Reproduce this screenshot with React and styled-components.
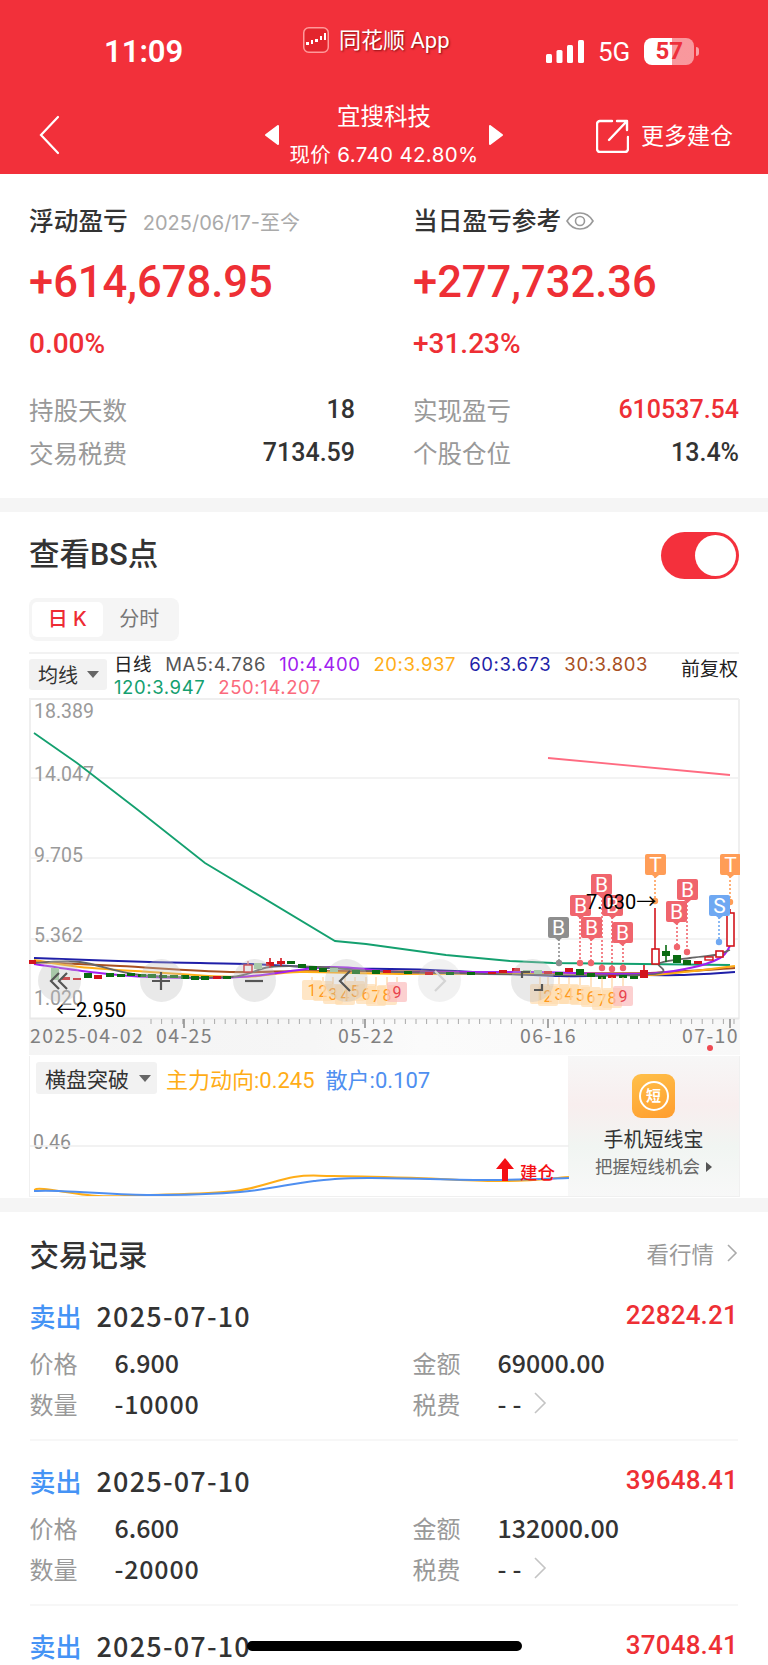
import React from "react";
import styled, { createGlobalStyle } from "styled-components";

const SANS = `"Inter", "Noto Sans CJK SC", sans-serif`;
const NUM = `"Roboto", "Noto Sans CJK SC", sans-serif`;
const CJKNUM = `"Noto Sans CJK SC", sans-serif`;
const RED = "#f2303a";
const TEXTRED = "#ee2f35";

const Global = createGlobalStyle`
  html, body { margin: 0; padding: 0; background: #fff; }
  * { box-sizing: border-box; }
  #root { width: 768px; height: 1665px; overflow: hidden; position: relative; font-family: ${SANS}; }
`;

const Header = styled.header`height: 174px; background: ${RED}; color: #fff;`;
const StatusBar = styled.div`height: 84px; display: grid; grid-template-columns: 303px 145px 1fr;`;
const Time = styled.div`padding: 34px 0 0 104px; font-size: 31px; line-height: 36px; font-weight: 600; font-family: ${NUM};`;
const AppTag = styled.div`
  display: flex; align-items: center; gap: 10px; height: 26px; margin-top: 27px; white-space: nowrap;
  font-size: 22px; line-height: 26px; text-shadow: 1px 1px 2px rgba(90,0,0,.7);
`;
const AppName = styled.span`padding-top: 2px; font-family: "Roboto", "Noto Sans CJK SC", sans-serif;`;
const AppIcon = styled.svg`width: 26px; height: 26px; flex: none;`;
const Signal = styled.div`display: flex; align-items: center; gap: 14px; padding: 38px 0 0 98px; height: 65px;`;
const FiveG = styled.span`font-size: 26px; line-height: 28px; font-family: ${NUM}; font-weight: 400;`;
const Battery = styled.div`
  position: relative; width: 50px; height: 27px; border-radius: 8px; flex: none;
  background: linear-gradient(90deg, #fff 0 56%, rgba(255,255,255,.5) 56% 100%);
  color: #ee2f3a; font-size: 24px; font-weight: 700; line-height: 27px; text-align: center;
  font-family: ${NUM};
  &::after { content: ""; position: absolute; right: -5px; top: 9px; width: 3px; height: 9px; border-radius: 0 3px 3px 0; background: rgba(255,255,255,.55); }
`;
const NavBar = styled.nav`height: 90px; display: grid; grid-template-columns: 265px 238px 1fr;`;
const Back = styled.svg`width: 22px; height: 40px; margin: 31px 0 0 38px; display: block;`;
const Switcher = styled.div`display: flex; justify-content: space-between; align-items: flex-start; padding-top: 41px;`;
const Tri = styled.svg`width: 14px; height: 20px; display: block;`;
const TitleBox = styled.div`margin-top: -24px; text-align: center;`;
const StockName = styled.div`font-size: 23.5px; line-height: 32px; margin-bottom: 10px;`;
const StockPrice = styled.div`font-size: 20.5px; line-height: 24px; white-space: nowrap; letter-spacing: .35px;`;
const More = styled.div`display: flex; align-items: flex-start; gap: 12px; padding: 35px 0 0 93px; font-size: 23px; line-height: 34px; white-space: nowrap;`;
const ExportIcon = styled.svg`width: 33px; height: 34px; flex: none;`;

const Summary = styled.section`
  height: 324px; padding: 30px 29px 0; display: grid; grid-template-columns: 326px 326px; column-gap: 58px; align-content: start;
`;
const Col = styled.div`display: flex; flex-direction: column;`;
const LabelRow = styled.div`display: flex; align-items: center; height: 34px;`;
const Label = styled.span`font-size: 24.7px; line-height: 34px; color: #333; font-weight: 500; white-space: nowrap;`;
const DateNote = styled.span`margin-left: 15px; font-size: 20px; color: #aaa; white-space: nowrap;`;
const Eye = styled.svg`width: 30px; height: 22px; margin-left: 4px;`;
const Big = styled.div`margin-top: 17px; font-size: 43.5px; line-height: 56px; font-weight: 500; color: ${TEXTRED}; font-family: "Roboto", sans-serif;`;
const Pct = styled.div`margin-top: 17px; font-size: 28px; line-height: 32px; font-weight: 500; color: ${TEXTRED}; font-family: "Roboto", sans-serif;`;
const StatRows = styled.div`margin-top: 32px; display: flex; flex-direction: column; gap: 9px;`;
const Stat = styled.div`display: flex; justify-content: space-between; align-items: center; height: 34px;`;
const StatLabel = styled.span`font-size: 24.5px; color: #999;`;
const StatValue = styled.span`font-size: 25px; font-weight: 500; font-family: "Roboto", sans-serif; color: ${(p) => p.$red ? TEXTRED : "#333"};`;

const Band = styled.div`height: 14px; background: #f5f5f5;`;

const Bs = styled.section`height: 686px; padding: 0 29px;`;
const BsHead = styled.div`height: 86px; display: flex; justify-content: space-between; align-items: center;`;
const BsTitle = styled.h2`margin: 0; font-size: 30.5px; line-height: 40px; font-weight: 500; color: #333; font-family: "Roboto", "Noto Sans CJK SC", sans-serif;`;
const Toggle = styled.div`
  width: 78px; height: 47px; border-radius: 24px; background: #f4303c; position: relative;
  &::after { content: ""; position: absolute; right: 3px; top: 3px; width: 41px; height: 41px; border-radius: 50%; background: #fff; }
`;
const Tabs = styled.div`width: 150px; height: 43px; padding: 4px 3px; border-radius: 8px; background: #f5f5f5; display: flex;`;
const Tab = styled.div`
  width: ${(p) => p.$active ? "72px" : "75px"}; height: 35px; border-radius: 5px; text-align: center;
  font-size: 20px; line-height: 35px; background: ${(p) => p.$active ? "#fff" : "transparent"};
  color: ${(p) => p.$active ? "#ee2b33" : "#777"}; font-weight: ${(p) => p.$active ? 500 : 400};
`;
const LegendRow = styled.div`
  margin-top: 11px; height: 46px; width: 710px; border-top: 2px solid #f2f2f2; display: flex; align-items: flex-start; position: relative;
`;
const Select = styled.div`
  height: ${(p) => p.$h}px; padding: 0 ${(p) => p.$pr}px 0 ${(p) => p.$pl}px; display: flex; align-items: center; gap: ${(p) => p.$gap}px; background: #f2f2f2; border-radius: 3px;
  font-size: ${(p) => p.$fs}px; color: #333; white-space: nowrap; flex: none; margin-top: ${(p) => p.$mt || 0}px;
`;
const Caret = styled.i`width: 0; height: 0; border-left: 6px solid transparent; border-right: 6px solid transparent; border-top: 7px solid #666;`;
const LegendItems = styled.div`width: 560px; margin-left: 7px; display: flex; flex-wrap: wrap; column-gap: 13px; font-size: 18.5px; line-height: 23px; white-space: nowrap; letter-spacing: .6px; margin-top: -1px;`;
const LegendItem = styled.span`color: ${(p) => p.$c};`;
const Fq = styled.span`position: absolute; right: 1px; top: 3px; font-size: 19px; line-height: 26px; color: #222;`;

const ChartBox = styled.div`position: relative; width: 711px; height: 357px;`;
const ChartSvg = styled.svg`display: block; width: 711px; height: 357px;`;
const Ctrl = styled.div`
  position: absolute; top: 261px; left: ${(p) => p.$x - 29 - 21.5}px; width: 43px; height: 43px; border-radius: 50%;
  background: rgba(190,190,190,${(p) => p.$faint ? .22 : .34}); display: flex; align-items: center; justify-content: center;
`;

const SubPanel = styled.div`margin-top: 1px; width: 711px; height: 141px; display: flex; border: 1px solid #f0f0f0; border-width: 0 1px 1px;`;
const SubMain = styled.div`position: relative; width: 539px; height: 140px;`;
const SubHead = styled.div`position: relative; z-index: 1; display: flex; align-items: center; padding: 6px 0 0 6px; white-space: nowrap; font-family: "Roboto", "Noto Sans CJK SC", sans-serif;`;
const SubVal = styled.span`color: ${(p) => p.$c}; margin-left: ${(p) => p.$ml}px; font-size: 22px;`;
const SubSvg = styled.svg`position: absolute; left: 0; top: 0; width: 539px; height: 140px;`;
const Promo = styled.div`
  width: 171px; background: linear-gradient(180deg, #f7f7f7 0%, #f8eeee 35%, #f1f5f2 65%, #f8f8f8 100%);
  display: flex; flex-direction: column; align-items: center; padding-top: 18px;
`;
const PromoIcon = styled.div`
  width: 43px; height: 44px; border-radius: 9px; background: linear-gradient(160deg, #ffc04a, #ff9d2e);
  display: flex; align-items: center; justify-content: center;
`;
const PromoRing = styled.div`width: 30px; height: 30px; border-radius: 50%; border: 2px solid #fff; color: #fff; font-size: 15px; font-weight: 700; line-height: 26px; text-align: center;`;
const PromoTitle = styled.div`margin-top: 8px; font-size: 20px; line-height: 28px; color: #333;`;
const PromoSub = styled.div`display: flex; align-items: center; gap: 6px; font-size: 17.5px; line-height: 26px; color: #666;`;
const PromoTri = styled.i`width: 0; height: 0; border-top: 5px solid transparent; border-bottom: 5px solid transparent; border-left: 6px solid #555;`;

const Records = styled.section`padding: 0 30px 0 29.5px;`;
const RecHead = styled.div`height: 64px; display: flex; justify-content: space-between; align-items: center; padding-top: 17px;`;
const RecTitle = styled.h2`margin: 0; font-size: 29.5px; font-weight: 500; color: #333;`;
const RecLink = styled.div`display: flex; align-items: center; gap: 13px; font-size: 22.5px; color: #999;`;
const Chev = styled.svg`width: ${(p) => p.$w}px; height: ${(p) => p.$h}px; flex: none; margin-left: ${(p) => p.$ml || 0}px;`;
const Rec = styled.div`height: 165px; padding-top: 18px; border-bottom: 2px solid #f7f7f7; &:last-child { border-bottom: 0; }`;
const RecTop = styled.div`display: flex; align-items: center; height: 42px;`;
const Side = styled.span`font-size: 26px; color: #4593f5; font-weight: 500; margin-right: 15px;`;
const RecDate = styled.span`font-size: 27px; color: #333; font-weight: 500; font-family: ${CJKNUM}; letter-spacing: 1.2px;`;
const RecAmt = styled.span`margin-left: auto; font-size: 26px; color: ${TEXTRED}; font-weight: 500; font-family: ${NUM}; letter-spacing: .2px;`;
const RecGrid = styled.div`margin-top: 9px; display: grid; grid-template-columns: 383px 325px; row-gap: 7px;`;
const Cell = styled.div`display: flex; align-items: center; height: 34px;`;
const CellLabel = styled.span`width: 85px; font-size: 24px; color: #999; flex: none;`;
const CellValue = styled.span`font-size: 25px; color: #333; font-weight: 500; font-family: ${CJKNUM}; letter-spacing: ${(p) => p.$ls || 0}px;`;
const Home = styled.div`position: absolute; left: 247px; top: 1641px; width: 275px; height: 10px; border-radius: 5px; background: #000;`;

const smooth = (pts) => {
  let d = `M${pts[0][0]} ${pts[0][1]}`;
  for (let i = 0; i < pts.length - 1; i++) {
    const p0 = pts[i - 1] || pts[i], p1 = pts[i], p2 = pts[i + 1], p3 = pts[i + 2] || p2;
    const c1 = [p1[0] + (p2[0] - p0[0]) / 6, p1[1] + (p2[1] - p0[1]) / 6];
    const c2 = [p2[0] - (p3[0] - p1[0]) / 6, p2[1] - (p3[1] - p1[1]) / 6];
    d += `C${c1[0].toFixed(1)} ${c1[1].toFixed(1)} ${c2[0].toFixed(1)} ${c2[1].toFixed(1)} ${p2[0]} ${p2[1]}`;
  }
  return d;
};
const poly = (a) => a.map((p) => p.join(",")).join(" ");

const MA = [
  { c: "#1f1fa8", w: 2, p: [[34,958],[150,962],[250,964],[330,968],[430,970],[560,976],[620,975],[680,975],[735,972]] },
  { c: "#a84f1f", w: 2.2, p: [[34,962],[120,966],[230,972],[330,971],[560,973],[650,973],[735,968]] },
  { c: "#ffad17", w: 2, p: [[34,960],[80,967],[150,972],[240,977],[300,972],[400,974],[560,973],[650,975],[735,966]] },
  { c: "#a020f0", w: 2, p: [[34,964],[90,972],[150,977],[240,977],[330,967],[400,972],[530,972],[640,974],[690,968],[720,958],[730,946]] },
  { c: "#666", w: 1.8, p: [[34,963],[80,962],[140,975],[230,977],[270,967],[320,967],[400,972],[640,975],[660,963],[690,958],[715,955],[730,950]] },
];
const GREEN120 = [[34,733],[77,763],[138,810],[205,863],[335,941],[366,944],[446,955],[510,961],[553,963],[730,965]];

const CANDLES = [
  [32,960,964,"r"],[55,968,980,"p"],[66,977,980,"r"],[77,978,980,"r"],[88,973,978,"g"],[98,975,979,"r"],[110,973,977,"g"],
  [121,974,977,"g"],[131,973,976,"g"],[142,974,977,"g"],[152,974,978,"g"],[163,975,978,"g"],[174,975,978,"g"],[185,975,979,"g"],
  [195,976,980,"g"],[205,976,980,"g"],[217,976,979,"r"],[227,976,979,"g"],[248,965,972,"h"],[258,963,969,"p"],[270,962,966,"r"],
  [281,961,964,"r"],[291,961,964,"g"],[302,964,968,"g"],[313,966,970,"g"],[323,968,972,"g"],[334,968,972,"p"],
  [356,970,974,"g"],[376,970,974,"g"],[387,970,973,"r"],[408,971,974,"g"],[429,972,975,"r"],[450,972,975,"g"],[471,972,975,"g"],
  [492,972,974,"r"],[503,970,973,"r"],[516,968,971,"r"],[527,970,973,"p"],[538,970,974,"p"],[548,971,974,"r"],[559,972,975,"g"],[569,968,972,"r"],
  [580,969,975,"g"],[591,973,977,"g"],[602,976,979,"g"],[612,975,978,"r"],[623,975,978,"g"],[634,976,979,"g"],[644,970,978,"r"],
  [666,951,956,"g"],[677,955,963,"g"],[687,960,965,"g"],[698,961,964,"r"],[709,957,960,"h"],
];
const WICKS = [[644,965,970,"#d2141c"],[666,945,962,"#0a6b12"],[655,908,949,"#d2141c"],[730,909,913,"#d2141c"],[270,958,968,"#d2141c"],[281,958,966,"#d2141c"],[248,961,965,"#e89090"]];
const BADGES = [
  { t: "B", x: 548, y: 917, c: "#8e8e8e", dx: 559, dy: 963 },
  { t: "B", x: 570, y: 895, c: "#f0656d", dx: 580, dy: 963 },
  { t: "B", x: 581, y: 917, c: "#f0656d", dx: 591, dy: 963 },
  { t: "B", x: 591, y: 874, c: "#f0656d", dx: 602, dy: 968 },
  { t: "B", x: 602, y: 895, c: "#f0656d", dx: 612, dy: 969 },
  { t: "B", x: 612, y: 922, c: "#f0656d", dx: 623, dy: 968 },
  { t: "B", x: 666, y: 901, c: "#f0656d", dx: 677, dy: 947 },
  { t: "B", x: 677, y: 879, c: "#f0656d", dx: 687, dy: 952 },
  { t: "T", x: 645, y: 854, c: "#ff9d57", dx: 655, dy: 901 },
  { t: "T", x: 720, y: 854, c: "#ff9d57", dx: 730, dy: 902 },
  { t: "S", x: 709, y: 895, c: "#6fa8f2", dx: 719, dy: 942 },
];
const TAGS = [
  ["1",312,990],["2",323,991],["3",333,994],["4",345,995],["5",355,991],["6",366,994],["7",376,996],["8",387,995],["9",397,992],
  ["1",540,994],["2",548,996],["3",559,994],["4",569,994],["5",580,995],["6",591,997],["7",602,1000],["8",612,998],["9",623,996],
];
const TICKS = Array.from({ length: 56 }, (_, i) => 151 + i * 10.6);

function Chart() {
  return (
    <ChartSvg viewBox="29 698 711 357">
      <defs>
        <linearGradient id="ax" x1="0" x2="1" y1="0" y2="0">
          <stop offset="0" stopColor="#f4f4f4" /><stop offset=".4" stopColor="#f6f6f6" /><stop offset=".55" stopColor="#fbfbfb" /><stop offset="1" stopColor="#f8f8f8" />
        </linearGradient>
      </defs>
      <rect x="29" y="1019" width="711" height="36" fill="url(#ax)" />
      <g stroke="#efefef" strokeWidth="1.5" fill="none">
        <path d="M29 699H739M30 699V1019M739 699V1019" strokeWidth="2" />
        <path d="M30 778H739M30 858H739M30 939H739" />
        <path d="M30 1018.5H739" strokeWidth="2" stroke="#e8e8e8" />
      </g>
      <g fontSize="19.5" fill="#9a9a9a" fontFamily="Roboto, sans-serif">
        <text x="34" y="718">18.389</text>
        <text x="34" y="781">14.047</text>
        <text x="34" y="862">9.705</text>
        <text x="34" y="942">5.362</text>
        <text x="34" y="1005">1.020</text>
      </g>
      <polyline points={poly(GREEN120)} fill="none" stroke="#14a06f" strokeWidth="1.8" />
      <line x1="548" y1="758" x2="730" y2="775" stroke="#ff6b81" strokeWidth="1.8" />
      {MA.map((m) => <path key={m.c} d={smooth(m.p)} fill="none" stroke={m.c} strokeWidth={m.w} />)}
      {WICKS.map((w, i) => <line key={i} x1={w[0]} x2={w[0]} y1={w[1]} y2={w[2]} stroke={w[3]} strokeWidth="1.6" />)}
      {CANDLES.map(([x, t, b, k], i) => (
        <rect key={i} x={x - 4} y={t} width="8" height={b - t}
          fill={k === "g" ? "#0a6b12" : k === "r" ? "#d2141c" : k === "p" ? "#9fce9f" : "#fff"}
          stroke={k === "h" ? "#d2141c" : "none"} strokeWidth="1.4" />
      ))}
      <rect x="652" y="949" width="7" height="15" fill="#fff" stroke="#d2141c" strokeWidth="1.6" />
      <rect x="727" y="913" width="7" height="33" fill="#fff" stroke="#d2141c" strokeWidth="1.6" />
      <rect x="716" y="951" width="7" height="6" fill="#fff" stroke="#d2141c" strokeWidth="1.6" />
      {TAGS.map(([t, x, y], i) => (
        <g key={i}>
          <line x1={x} x2={x} y1={977} y2={y - 10} stroke="#ffc98a" strokeWidth="1" />
          <rect x={x - 10} y={y - 10} width="20" height="20" rx="2" fill={t === "9" ? "#fbbcbc" : "#ffdcae"} opacity=".7" />
          <text x={x} y={y + 6} textAnchor="middle" fontSize="16" fill={t === "9" ? "#e8434c" : "#ff9a1f"} fontFamily="Roboto, sans-serif">{t}</text>
        </g>
      ))}
      {BADGES.map((b, i) => (
        <g key={i}>
          <line x1={b.dx} x2={b.dx} y1={b.y + 22} y2={b.dy} stroke={b.c} strokeWidth="1.6" strokeDasharray="2 2" />
          <circle cx={b.dx} cy={b.dy} r="3.2" fill={b.c} />
          <rect x={b.x} y={b.y} width="21" height="21" rx="2" fill={b.c} />
          <path d={`M${b.x + 7} ${b.y + 21}h7l-3.5 3z`} fill={b.c} />
          <text x={b.x + 10.5} y={b.y + 18} textAnchor="middle" fontSize="21" fill="#fff" fontFamily="Roboto, sans-serif">{b.t}</text>
        </g>
      ))}
      <text x="586" y="909" fontSize="20" fill="#000" fontFamily="Roboto, sans-serif">7.030<tspan fontFamily="'Noto Sans CJK SC', sans-serif">→</tspan></text>
      <text x="56" y="1017" fontSize="20" fill="#000" fontFamily="Roboto, sans-serif"><tspan fontFamily="'Noto Sans CJK SC', sans-serif">←</tspan>2.950</text>
      <g stroke="#aaa" strokeWidth="1">
        {TICKS.map((x) => <line key={x} x1={x} x2={x} y1="1019" y2="1024" />)}
      </g>
      <g stroke="#777" strokeWidth="1.3">
        {[184, 365, 548, 730].map((x) => <line key={x} x1={x} x2={x} y1="1019" y2="1028" />)}
      </g>
      <g fontSize="19.5" fill="#808080" fontFamily="'Noto Sans CJK SC', sans-serif" letterSpacing="1.4">
        <text x="30" y="1043">2025-04-02</text>
        <text x="156" y="1043">04-25</text>
        <text x="338" y="1043">05-22</text>
        <text x="520" y="1043">06-16</text>
        <text x="682" y="1043">07-10</text>
      </g>
      <circle cx="710" cy="1048" r="3" fill="#ef4a52" />
    </ChartSvg>
  );
}

const CtrlIcon = ({ d, c = "#555" }) => (
  <svg width="24" height="24" viewBox="0 0 24 24" fill="none" stroke={c} strokeWidth="2.2"><path d={d} /></svg>
);

const RECS = [
  { amt: "22824.21", price: "6.900", total: "69000.00", qty: "-10000" },
  { amt: "39648.41", price: "6.600", total: "132000.00", qty: "-20000" },
];

const RecHeadRow = ({ amt }) => (
  <RecTop>
    <Side>卖出</Side>
    <RecDate>2025-07-10</RecDate>
    <RecAmt>{amt}</RecAmt>
  </RecTop>
);

const Record = ({ r }) => (
  <Rec>
    <RecHeadRow amt={r.amt} />
    <RecGrid>
      <Cell><CellLabel>价格</CellLabel><CellValue>{r.price}</CellValue></Cell>
      <Cell><CellLabel>金额</CellLabel><CellValue>{r.total}</CellValue></Cell>
      <Cell><CellLabel>数量</CellLabel><CellValue $ls={.8}>{r.qty}</CellValue></Cell>
      <Cell>
        <CellLabel>税费</CellLabel><CellValue $ls={6}>--</CellValue>
        <Chev $w={14} $h={22} $ml={6} viewBox="0 0 14 22" fill="none" stroke="#c4c4c4" strokeWidth="1.6"><path d="M2 1l10 10L2 21" /></Chev>
      </Cell>
    </RecGrid>
  </Rec>
);

export default function App() {
  return (
    <>
      <Global />
      <Header>
        <StatusBar>
          <Time>11:09</Time>
          <AppTag>
            <AppIcon viewBox="0 0 26 26">
              <rect x=".75" y=".75" width="24.5" height="24.5" rx="5" fill="#e3252d" stroke="#ff9a9a" strokeWidth="1.5" />
              <path d="M3 15h3v3H3zM8 13h2v4H8zM12 12h3v3h-3zM17 9h2v4h-2zM21 6h2v7h-2z" fill="#fff" />
            </AppIcon>
            <AppName>同花顺 App</AppName>
          </AppTag>
          <Signal>
            <svg width="38" height="23" viewBox="0 0 38 23" fill="#fff">
              <rect x="0" y="14" width="6" height="9" rx="1.5" /><rect x="10.5" y="10" width="6" height="13" rx="1.5" /><rect x="21" y="5" width="6" height="18" rx="1.5" /><rect x="32" y="0" width="6" height="23" rx="1.5" />
            </svg>
            <FiveG>5G</FiveG>
            <Battery>57</Battery>
          </Signal>
        </StatusBar>
        <NavBar>
          <Back viewBox="0 0 22 40" fill="none" stroke="#fff" strokeWidth="2.2" strokeLinecap="round"><path d="M20 2L3 20l17 18" /></Back>
          <Switcher>
            <Tri viewBox="0 0 14 20" fill="#fff"><path d="M13 1v18L1 10z" stroke="#fff" strokeWidth="2" strokeLinejoin="round" /></Tri>
            <TitleBox>
              <StockName>宜搜科技</StockName>
              <StockPrice>现价 6.740 42.80%</StockPrice>
            </TitleBox>
            <Tri viewBox="0 0 14 20" fill="#fff"><path d="M1 1v18l12-9z" stroke="#fff" strokeWidth="2" strokeLinejoin="round" /></Tri>
          </Switcher>
          <More>
            <ExportIcon viewBox="0 0 33 34" fill="none" stroke="#fff" strokeWidth="2.4" strokeLinecap="round" strokeLinejoin="round">
              <path d="M16 2H4a3 3 0 0 0-3 3v25a3 3 0 0 0 3 3h25a3 3 0 0 0 3-3V18" /><path d="M13 21L31 2M21 2h10v9" />
            </ExportIcon>
            更多建仓
          </More>
        </NavBar>
      </Header>

      <Summary>
        <Col>
          <LabelRow><Label>浮动盈亏</Label><DateNote>2025/06/17-至今</DateNote></LabelRow>
          <Big>+614,678.95</Big>
          <Pct>0.00%</Pct>
          <StatRows>
            <Stat><StatLabel>持股天数</StatLabel><StatValue>18</StatValue></Stat>
            <Stat><StatLabel>交易税费</StatLabel><StatValue>7134.59</StatValue></Stat>
          </StatRows>
        </Col>
        <Col>
          <LabelRow>
            <Label>当日盈亏参考</Label>
            <Eye viewBox="0 0 30 22" fill="none" stroke="#999" strokeWidth="1.6"><path d="M2 11c3-5 8-8 13-8s10 3 13 8c-3 5-8 8-13 8S5 16 2 11z" /><circle cx="15" cy="11" r="4.5" /></Eye>
          </LabelRow>
          <Big>+277,732.36</Big>
          <Pct>+31.23%</Pct>
          <StatRows>
            <Stat><StatLabel>实现盈亏</StatLabel><StatValue $red>610537.54</StatValue></Stat>
            <Stat><StatLabel>个股仓位</StatLabel><StatValue>13.4%</StatValue></Stat>
          </StatRows>
        </Col>
      </Summary>
      <Band />

      <Bs>
        <BsHead><BsTitle>查看BS点</BsTitle><Toggle /></BsHead>
        <Tabs><Tab $active>日 K</Tab><Tab>分时</Tab></Tabs>
        <LegendRow>
          <Select $h={31} $pl={9} $pr={8} $gap={9} $fs={20} $mt={5}>均线<Caret /></Select>
          <LegendItems>
            <LegendItem $c="#222">日线</LegendItem>
            <LegendItem $c="#555">MA5:4.786</LegendItem>
            <LegendItem $c="#a020f0">10:4.400</LegendItem>
            <LegendItem $c="#ffad17">20:3.937</LegendItem>
            <LegendItem $c="#1f1fa8">60:3.673</LegendItem>
            <LegendItem $c="#a84f1f">30:3.803</LegendItem>
            <LegendItem $c="#14a06f">120:3.947</LegendItem>
            <LegendItem $c="#fb6a7c">250:14.207</LegendItem>
          </LegendItems>
          <Fq>前复权</Fq>
        </LegendRow>
        <ChartBox>
          <Chart />
          <Ctrl $x={59}><CtrlIcon d="M12 4l-8 8 8 8M20 4l-8 8 8 8" /></Ctrl>
          <Ctrl $x={161}><CtrlIcon d="M12 3v18M3 12h18" /></Ctrl>
          <Ctrl $x={254}><CtrlIcon d="M3 12h18" /></Ctrl>
          <Ctrl $x={346}><CtrlIcon d="M16 2L6 12l10 10" /></Ctrl>
          <Ctrl $x={439} $faint><CtrlIcon c="#d4d4d4" d="M8 2l10 10L8 22" /></Ctrl>
          <Ctrl $x={532}><CtrlIcon d="M2 9V3h8M22 15v6h-8" /></Ctrl>
        </ChartBox>
        <SubPanel>
          <SubMain>
            <SubSvg viewBox="30 1056 539 140">
              <text x="33" y="1149" fontSize="19.5" fill="#8e8e8e" fontFamily="Roboto, sans-serif">0.46</text>
              <line x1="30" x2="569" y1="1146" y2="1146" stroke="#eee" strokeWidth="1.5" />
              <path d={smooth([[34,1190],[44,1189],[98,1196],[147,1195],[235,1191],[294,1177],[333,1176],[417,1178],[505,1181],[569,1177]])} fill="none" stroke="#ffad17" strokeWidth="2" />
              <path d={smooth([[34,1191],[59,1191],[147,1195],[240,1192],[314,1181],[368,1178],[490,1180],[569,1178]])} fill="none" stroke="#4f8ff0" strokeWidth="2" />
              <path d="M505 1158l-9 11h6v12h6v-12h6z" fill="#f40f14" />
              <text x="520" y="1179" fontSize="17.5" fill="#f40f14" fontWeight="500" fontFamily="'Noto Sans CJK SC', sans-serif">建仓</text>
            </SubSvg>
            <SubHead>
              <Select $h={32} $pl={9} $pr={6} $gap={10} $fs={21}>横盘突破<Caret /></Select>
              <SubVal $c="#ffad17" $ml={9}>主力动向:0.245</SubVal>
              <SubVal $c="#4f8ff0" $ml={11}>散户:0.107</SubVal>
            </SubHead>
          </SubMain>
          <Promo>
            <PromoIcon><PromoRing>短</PromoRing></PromoIcon>
            <PromoTitle>手机短线宝</PromoTitle>
            <PromoSub>把握短线机会<PromoTri /></PromoSub>
          </Promo>
        </SubPanel>
      </Bs>
      <Band />

      <Records>
        <RecHead>
          <RecTitle>交易记录</RecTitle>
          <RecLink>看行情
            <Chev $w={11} $h={18} viewBox="0 0 11 18" fill="none" stroke="#aaa" strokeWidth="1.6"><path d="M1 1l8 8-8 8" /></Chev>
          </RecLink>
        </RecHead>
        {RECS.map((r, i) => <Record key={i} r={r} />)}
        <Rec><RecHeadRow amt="37048.41" /></Rec>
      </Records>
      <Home />
    </>
  );
}
